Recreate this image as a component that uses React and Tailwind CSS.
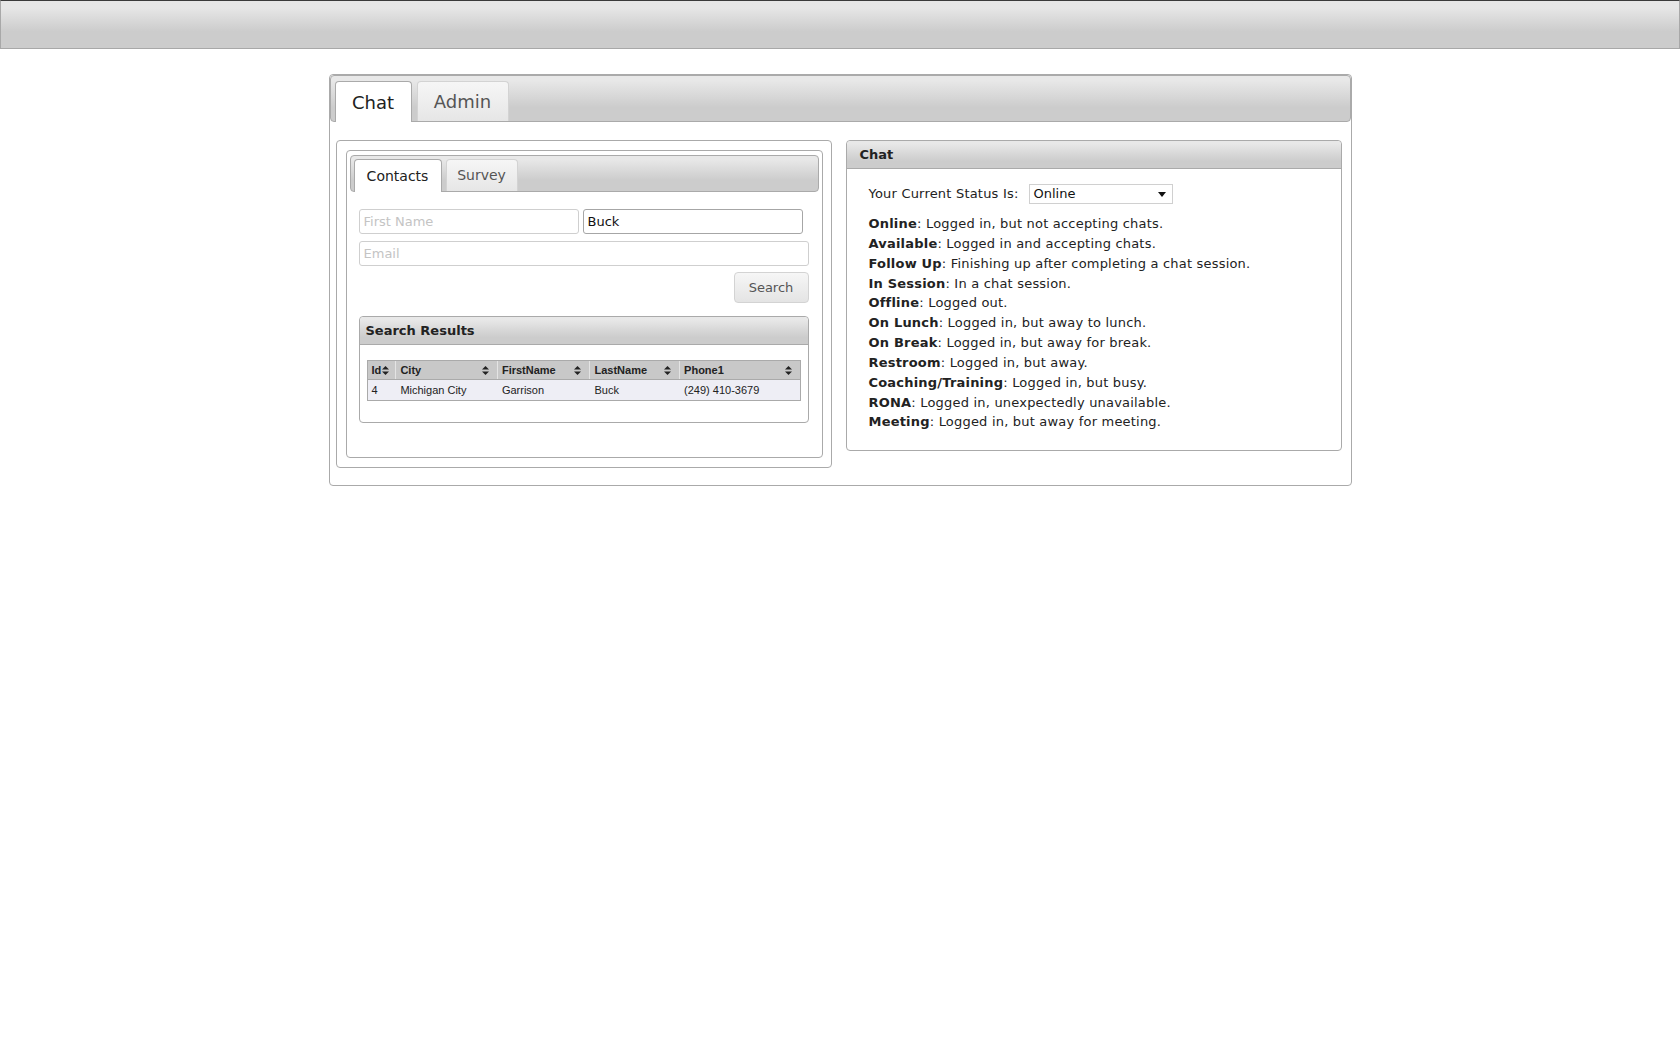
import React from "react";

const SortIcon = () => (
  <svg width="7" height="9" viewBox="0 0 7 9" className="shrink-0">
    <path d="M3.5 0 L7 3.5 L0 3.5 Z" fill="#222" />
    <path d="M3.5 9 L7 5.5 L0 5.5 Z" fill="#222" />
  </svg>
);

const statuses = [
  ["Online", "Logged in, but not accepting chats."],
  ["Available", "Logged in and accepting chats."],
  ["Follow Up", "Finishing up after completing a chat session."],
  ["In Session", "In a chat session."],
  ["Offline", "Logged out."],
  ["On Lunch", "Logged in, but away to lunch."],
  ["On Break", "Logged in, but away for break."],
  ["Restroom", "Logged in, but away."],
  ["Coaching/Training", "Logged in, but busy."],
  ["RONA", "Logged in, unexpectedly unavailable."],
  ["Meeting", "Logged in, but away for meeting."],
];

const cols = [
  { name: "Id", w: "w-[28px]", tight: true },
  { name: "City", w: "w-[102px]" },
  { name: "FirstName", w: "w-[93px]" },
  { name: "LastName", w: "w-[90px]" },
  { name: "Phone1", w: "w-[121px]" },
];

const row = ["4", "Michigan City", "Garrison", "Buck", "(249) 410-3679"];

export default function App() {
  return (
    <div className="min-h-[1050px] bg-white text-[#222]" style={{ fontFamily: '"DejaVu Sans", Verdana, sans-serif' }}>
      {/* Top header bar */}
      <div className="h-[49px] w-full border border-[#a8a8a8] border-t-[#3a3a3a] bg-linear-to-b from-[#e6e6e6] from-[15%] to-[#cccccc] to-[65%]" />

      {/* Outer tabs widget */}
      <div className="mx-auto mt-[25px] w-[1023px] rounded-[4px] border border-[#aaa] bg-white">
        {/* Nav */}
        <div className="flex h-[47px] items-end gap-[5px] rounded-[4px] border border-[#aaa] bg-linear-to-b from-[#e8e8e8] from-[10%] to-[#cccccc] to-[70%] px-[4px]">
          <div className="relative z-10 mb-[-1px] flex h-[41px] w-[77px] items-center justify-center rounded-t-[4px] border border-b-0 border-[#aaa] bg-white text-[18px] text-[#212121]">
            Chat
          </div>
          <div className="flex h-[40px] w-[92px] items-center justify-center rounded-t-[4px] border border-b-0 border-[#d3d3d3] bg-linear-to-b from-[#f6f6f6] to-[#e6e6e6] text-[18px] text-[#555]">
            Admin
          </div>
        </div>

        {/* Panel */}
        <div className="flex items-start gap-[14px] pb-[17px] pl-[6px] pr-[9px] pt-[18px]">
          {/* Left box */}
          <div className="w-[496px] rounded-[4px] border border-[#aaa] pb-[9px] pl-[9px] pr-[8px] pt-[9px]">
            <div className="rounded-[4px] border border-[#aaa] px-[3px] pb-[34px] pt-[4px]">
              {/* Sub nav */}
              <div className="flex h-[37px] items-end gap-[4px] rounded-[4px] border border-[#aaa] bg-linear-to-b from-[#e8e8e8] from-[10%] to-[#cccccc] to-[70%] px-[3px]">
                <div className="relative z-10 mb-[-1px] flex h-[33px] w-[88px] items-center justify-center rounded-t-[4px] border border-b-0 border-[#aaa] bg-white text-[14px] text-[#212121]">
                  Contacts
                </div>
                <div className="flex h-[32px] w-[72px] items-center justify-center rounded-t-[4px] border border-b-0 border-[#d3d3d3] bg-linear-to-b from-[#f6f6f6] to-[#e6e6e6] text-[14px] text-[#555]">
                  Survey
                </div>
              </div>

              {/* Form */}
              <div className="pl-[9px] pr-[10px] pt-[17px]">
                <div className="flex gap-[4px]">
                  <input
                    placeholder="First Name"
                    className="h-[25px] w-[220px] rounded-[3px] border border-[#cfcfcf] px-[4px] text-[13px] text-[#222] outline-none placeholder:text-[#c4c4c4]"
                  />
                  <input
                    defaultValue="Buck"
                    className="h-[25px] w-[220px] rounded-[3px] border border-[#a6a6a6] px-[4px] text-[13px] text-[#111] outline-none"
                  />
                </div>
                <input
                  placeholder="Email"
                  className="mt-[7px] block h-[25px] w-[450px] rounded-[3px] border border-[#cfcfcf] px-[4px] text-[13px] text-[#222] outline-none placeholder:text-[#c4c4c4]"
                />
                <div className="mt-[6px] flex justify-end">
                  <div className="flex h-[31px] w-[75px] items-center justify-center rounded-[4px] border border-[#d3d3d3] bg-linear-to-b from-[#f6f6f6] to-[#e4e4e4] text-[13px] text-[#555]">
                    Search
                  </div>
                </div>

                {/* Search results */}
                <div className="mt-[13px] rounded-[4px] border border-[#aaa]">
                  <div className="flex h-[28px] items-center rounded-t-[4px] border-b border-[#aaa] bg-linear-to-b from-[#e8e8e8] from-[10%] to-[#cccccc] to-[75%] pl-[6px] text-[13px] font-bold text-[#222]">
                    Search Results
                  </div>
                  <div className="px-[7px] pb-[21px] pt-[15px]">
                    <div
                      className="w-[434px] border border-[#aaa] text-[11px]"
                      style={{ fontFamily: '"Liberation Sans", Arial, sans-serif' }}
                    >
                      <div className="flex h-[19px] border-b border-[#aaa] bg-[#c8c8c8] font-bold text-[#222]">
                        {cols.map((c, i) => (
                          <div
                            key={c.name}
                            className={`${c.w} flex items-center ${i > 0 ? "border-l border-[#e4e4e4]" : ""} ${c.tight ? "pl-[4px] gap-[1px]" : "justify-between pl-[4px] pr-[8px]"}`}
                          >
                            <span>{c.name}</span>
                            <SortIcon />
                          </div>
                        ))}
                      </div>
                      <div className="flex h-[20px] bg-[#eeeef5] text-[#222]">
                        {cols.map((c, i) => (
                          <div key={c.name} className={`${c.w} flex items-center pl-[4px] ${i > 0 ? "border-l border-transparent" : ""}`}>
                            {row[i]}
                          </div>
                        ))}
                      </div>
                    </div>
                  </div>
                </div>
              </div>
            </div>
          </div>

          {/* Right box */}
          <div className="w-[496px] rounded-[4px] border border-[#aaa]">
            <div className="flex h-[28px] items-center rounded-t-[4px] border-b border-[#aaa] bg-linear-to-b from-[#e8e8e8] from-[10%] to-[#cccccc] to-[75%] pl-[13px] text-[13px] font-bold text-[#222]">
              Chat
            </div>
            <div className="pb-[18px] pl-[22px] pt-[15px] text-[13px] tracking-[0.2px]">
              <div className="flex items-center gap-[10px]">
                <span>Your Current Status Is:</span>
                <div className="flex h-[20px] w-[144px] items-center justify-between border border-[#d0d0d0] bg-white pl-[4px] pr-[6px] tracking-normal text-[#111]">
                  <span>Online</span>
                  <svg width="8" height="5" viewBox="0 0 8 5">
                    <path d="M0 0 L8 0 L4 5 Z" fill="#111" />
                  </svg>
                </div>
              </div>
              <div className="mt-[10px] leading-[19.84px]">
                {statuses.map(([b, t]) => (
                  <div key={b}>
                    <span className="font-bold">{b}</span>: {t}
                  </div>
                ))}
              </div>
            </div>
          </div>
        </div>
      </div>
    </div>
  );
}
